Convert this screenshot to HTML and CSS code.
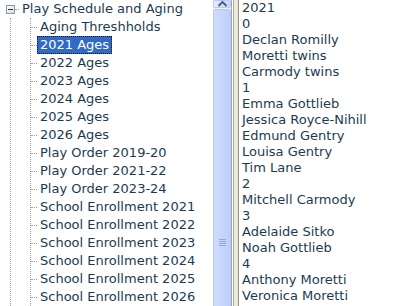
FILE: index.html
```html
<!DOCTYPE html>
<html lang="en">
<head>
    <meta charset="UTF-8">
    <title>Play Schedule and Aging</title>
    <link rel="stylesheet" href="styles.css">
</head>
<body>

    <div class="window">
        <!-- Tree pane -->
        <div class="tree-pane">
            <div class="tree">
                <div class="root-row">
                    <span class="expander"><span class="minus"></span></span>
                    <span class="connector root-connector"></span>
                    <span class="label">Play Schedule and Aging</span>
                </div>
                <div class="branch">
                    <ul class="children">
                        <li><span class="connector"></span><span class="label">Aging Threshholds</span></li>
                        <li><span class="connector"></span><span class="label selected">2021 Ages</span></li>
                        <li><span class="connector"></span><span class="label">2022 Ages</span></li>
                        <li><span class="connector"></span><span class="label">2023 Ages</span></li>
                        <li><span class="connector"></span><span class="label">2024 Ages</span></li>
                        <li><span class="connector"></span><span class="label">2025 Ages</span></li>
                        <li><span class="connector"></span><span class="label">2026 Ages</span></li>
                        <li><span class="connector"></span><span class="label">Play Order 2019-20</span></li>
                        <li><span class="connector"></span><span class="label">Play Order 2021-22</span></li>
                        <li><span class="connector"></span><span class="label">Play Order 2023-24</span></li>
                        <li><span class="connector"></span><span class="label">School Enrollment 2021</span></li>
                        <li><span class="connector"></span><span class="label">School Enrollment 2022</span></li>
                        <li><span class="connector"></span><span class="label">School Enrollment 2023</span></li>
                        <li><span class="connector"></span><span class="label">School Enrollment 2024</span></li>
                        <li><span class="connector"></span><span class="label">School Enrollment 2025</span></li>
                        <li><span class="connector"></span><span class="label">School Enrollment 2026</span></li>
                    </ul>
                </div>
            </div>

            <!-- Scrollbar -->
            <div class="scrollbar">
                <div class="scroll-btn">
                    <svg width="9" height="6" viewBox="0 0 9 6">
                        <path d="M0.5 5 L4.5 1 L8.5 5" fill="none" stroke="#4d6185" stroke-width="2"/>
                    </svg>
                </div>
                <div class="thumb">
                    <div class="grip">
                        <span></span><span></span><span></span><span></span>
                    </div>
                </div>
            </div>
        </div>

        <div class="splitter"></div>

        <!-- List pane -->
        <div class="list-pane">
            <div>2021</div>
            <div>0</div>
            <div>Declan Romilly</div>
            <div>Moretti twins</div>
            <div>Carmody twins</div>
            <div>1</div>
            <div>Emma Gottlieb</div>
            <div>Jessica Royce-Nihill</div>
            <div>Edmund Gentry</div>
            <div>Louisa Gentry</div>
            <div>Tim Lane</div>
            <div>2</div>
            <div>Mitchell Carmody</div>
            <div>3</div>
            <div>Adelaide Sitko</div>
            <div>Noah Gottlieb</div>
            <div>4</div>
            <div>Anthony Moretti</div>
            <div>Veronica Moretti</div>
        </div>
    </div>

</body>
</html>
```

FILE: styles.css
```css
body {
    margin: 0;
    padding: 0;
    background-color: #ffffff;
    font-family: "DejaVu Sans", Verdana, sans-serif;
    font-size: 13px;
    color: #1b3b50;
}
.window {
    display: flex;
    width: 414px;
    height: 306px;
    overflow: hidden;
}

/* Tree */
.tree-pane {
    display: flex;
    width: 231px;
    height: 306px;
    overflow: hidden;
}
.tree {
    width: 213px;
    overflow: hidden;
    white-space: nowrap;
}
.root-row {
    display: flex;
    align-items: center;
    height: 18px;
    padding-left: 6px;
}
.expander {
    display: flex;
    align-items: center;
    justify-content: center;
    width: 7px;
    height: 7px;
    border: 1px solid #8a9aa8;
    background: linear-gradient(135deg, #ffffff, #d8dcd6);
}
.minus {
    width: 5px;
    height: 1px;
    background-color: #1b3b50;
}
.connector {
    width: 6px;
    height: 0;
    border-top: 1px dotted #a0a0a0;
}
.root-connector {
    width: 4px;
}
.label {
    line-height: 16px;
    padding: 0 2px;
    border: 1px solid transparent;
}
.label.selected {
    background-color: #316ac5;
    color: #ffffff;
    border: 1px dotted #1a1a1a;
}
.branch {
    margin-left: 10px;
    border-left: 1px dotted #a0a0a0;
    height: 288px;
}
.children {
    list-style: none;
    margin: 0 0 0 19px;
    padding: 0;
    border-left: 1px dotted #a0a0a0;
}
.children li {
    display: flex;
    align-items: center;
    height: 18px;
}

/* Scrollbar */
.scrollbar {
    width: 18px;
    display: flex;
    flex-direction: column;
    gap: 1px;
    background-color: #f4f3ee;
}
.scroll-btn {
    display: flex;
    align-items: center;
    justify-content: center;
    height: 15px;
    border: 1px solid #b6c9f2;
    border-radius: 2px;
    background: linear-gradient(to right, #e6eefd, #c4d4fb);
}
.thumb {
    flex-shrink: 0;
    display: flex;
    align-items: center;
    justify-content: center;
    height: 464px;
    border: 1px solid #b6c9f2;
    border-radius: 2px;
    background: linear-gradient(to right, #cfdcfd, #bccffb);
}
.grip {
    display: flex;
    flex-direction: column;
    gap: 1px;
}
.grip span {
    display: block;
    width: 7px;
    height: 1px;
    background-color: #8fa9e6;
}

/* Splitter */
.splitter {
    width: 8px;
    flex-shrink: 0;
    background: linear-gradient(to right,
        #a6a6a6 0, #a6a6a6 1px,
        #ffffff 1px, #ffffff 2px,
        #b0ada2 2px, #b0ada2 3px,
        #ece9d8 3px, #ece9d8 7px,
        #8e8c84 7px, #8e8c84 8px);
}

/* List */
.list-pane {
    flex: 1;
    padding-left: 3px;
    line-height: 16px;
    white-space: nowrap;
    overflow: hidden;
}
```
